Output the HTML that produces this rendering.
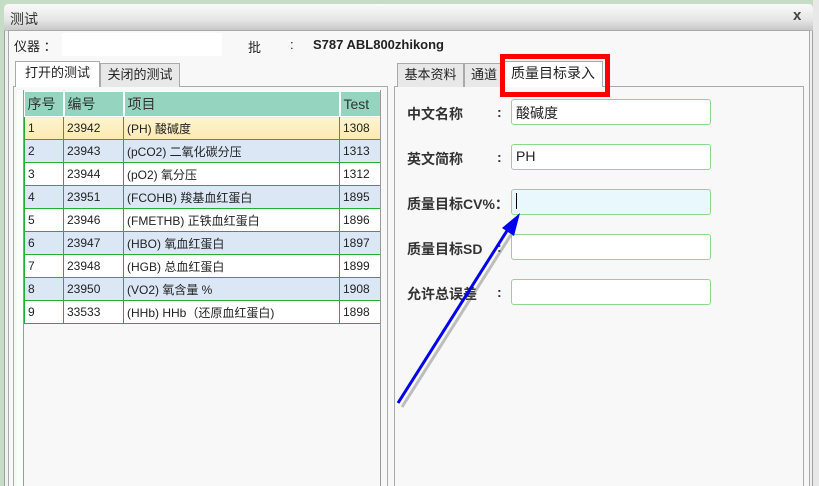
<!DOCTYPE html>
<html style="width:819px;height:486px;overflow:hidden"><head><meta charset="utf-8"><style>
*{box-sizing:border-box;margin:0;padding:0}
body{width:819px;height:486px;overflow:hidden;position:relative;background:#c5dcc5;font-family:"Liberation Sans","Noto Sans CJK SC",sans-serif;font-size:13px;color:#222}
.a{position:absolute}
.dlg{left:4px;top:4px;width:809px;height:482px;background:#f2f2f2;border:1px solid #a0a0a0;border-bottom:none;border-radius:4px 4px 0 0}
.title{left:4px;top:4px;width:809px;height:27px;background:linear-gradient(#fafafa,#e6e6e6 60%,#c8c8c8);border-radius:4px 4px 0 0;border-bottom:1px solid #bbb}
.body{left:8px;top:30px;width:802px;height:456px;background:#f8f8f8;border:1px solid #a8a8a8;border-bottom:none}
.tab{top:63px;height:24px;border:1px solid #aaa;border-bottom:none;background:#e8e8e8;font-size:13px;line-height:22px;text-align:center}
.tab.on{background:#fff;top:61px;height:26px;z-index:2}
.pan{border:1px solid #aaa;border-bottom:none;background:#f8f8f8}
table{border-collapse:collapse;position:absolute;left:24px;top:91px;font-size:12px;table-layout:fixed;width:356px}
td{border:1px solid #22b033;height:23px;padding:0 3px;white-space:nowrap;overflow:hidden}
th{background:#95d5c0;border:1px solid #fff;border-left:2px solid #fff;height:25px;text-align:left;font-weight:normal;font-size:14px;padding:0 3px;color:#333}
tr.y td{background:linear-gradient(#fdf4cf,#fbe9b0)}
tr.b td{background:#dbe7f4}
tr.w td{background:#fff}
.lab{left:407px;font-weight:bold;font-size:14px;color:#333}
.inp{left:511px;width:200px;height:26px;background:#fff;border:1px solid #8ed88e;border-radius:3px;font-size:14px;padding:3px 4px}
</style></head><body>
<div class="a dlg"></div>
<div class="a title"></div>
<div class="a" style="left:10px;top:9px;font-size:14px;color:#333">测试</div>
<div class="a" style="left:793px;top:7px;font-size:15px;font-weight:bold;color:#444">x</div>
<div class="a" style="left:813px;top:0;width:6px;height:486px;background:#e8e8e8"></div>
<div class="a body"></div>
<div class="a" style="left:14px;top:36px;font-size:13px">仪器 ：</div>
<div class="a" style="left:62px;top:33px;width:160px;height:23px;background:#fff"></div>
<div class="a" style="left:248px;top:37px;font-size:13px">批</div>
<div class="a" style="left:290px;top:37px;font-size:13px">:</div>
<div class="a" style="left:313px;top:37px;font-size:13px;font-weight:bold">S787 ABL800zhikong</div>

<div class="a pan" style="left:13px;top:86px;width:375px;height:400px"></div>
<div class="a" style="left:17px;top:90px;width:7px;height:396px;background:#fff;border-right:1px solid #7fa0c0"></div>
<div class="a tab on" style="left:15px;width:85px">打开的测试</div>
<div class="a tab" style="left:100px;width:80px">关闭的测试</div>
<table>
<colgroup><col style="width:39px"><col style="width:60px"><col style="width:216px"><col style="width:41px"></colgroup>
<tr><th style="border-left:none">序号</th><th>编号</th><th>项目</th><th>Test</th></tr>
<tr class="y"><td>1</td><td>23942</td><td>(PH) 酸碱度</td><td>1308</td></tr>
<tr class="b"><td>2</td><td>23943</td><td>(pCO2) 二氧化碳分压</td><td>1313</td></tr>
<tr class="w"><td>3</td><td>23944</td><td>(pO2) 氧分压</td><td>1312</td></tr>
<tr class="b"><td>4</td><td>23951</td><td>(FCOHB) 羧基血红蛋白</td><td>1895</td></tr>
<tr class="w"><td>5</td><td>23946</td><td>(FMETHB) 正铁血红蛋白</td><td>1896</td></tr>
<tr class="b"><td>6</td><td>23947</td><td>(HBO) 氧血红蛋白</td><td>1897</td></tr>
<tr class="w"><td>7</td><td>23948</td><td>(HGB) 总血红蛋白</td><td>1899</td></tr>
<tr class="b"><td>8</td><td>23950</td><td>(VO2) 氧含量 %</td><td>1908</td></tr>
<tr class="w"><td>9</td><td>33533</td><td>(HHb) HHb（还原血红蛋白)</td><td>1898</td></tr>
</table>
<div class="a" style="left:380px;top:90px;width:1px;height:396px;background:#999"></div>

<div class="a pan" style="left:394px;top:86px;width:410px;height:400px"></div>
<div class="a tab" style="left:397px;width:67px">基本资料</div>
<div class="a tab" style="left:464px;width:40px">通道</div>
<div class="a tab on" style="left:503px;width:100px;font-size:14px">质量目标录入</div>
<div class="a" style="left:500px;top:54px;width:110px;height:43px;border:5px solid #f00;z-index:3"></div>

<div class="a lab" style="top:104px">中文名称</div><div class="a lab" style="left:497px;top:104px">:</div>
<div class="a inp" style="top:99px">酸碱度</div>
<div class="a lab" style="top:149px">英文简称</div><div class="a lab" style="left:497px;top:149px">:</div>
<div class="a inp" style="top:144px">PH</div>
<div class="a lab" style="top:194px">质量目标CV%：</div>
<div class="a inp" style="top:189px;background:#e8f8fc"><span style="display:inline-block;width:1px;height:16px;background:#000"></span></div>
<div class="a lab" style="top:239px">质量目标SD</div><div class="a lab" style="left:497px;top:239px">:</div>
<div class="a inp" style="top:234px"></div>
<div class="a lab" style="top:284px">允许总误差</div><div class="a lab" style="left:497px;top:284px">:</div>
<div class="a inp" style="top:279px"></div>

<svg class="a" style="left:0;top:0;z-index:5" width="819" height="486">
<line x1="400" y1="405" x2="512" y2="228" stroke="#666" stroke-width="3" opacity=".4" transform="translate(2,2)"/>
<line x1="398" y1="403" x2="510" y2="226" stroke="#0000ee" stroke-width="3"/>
<polygon points="520,213 502,228 514,236" fill="#0000ee"/>
</svg>
</body></html>
